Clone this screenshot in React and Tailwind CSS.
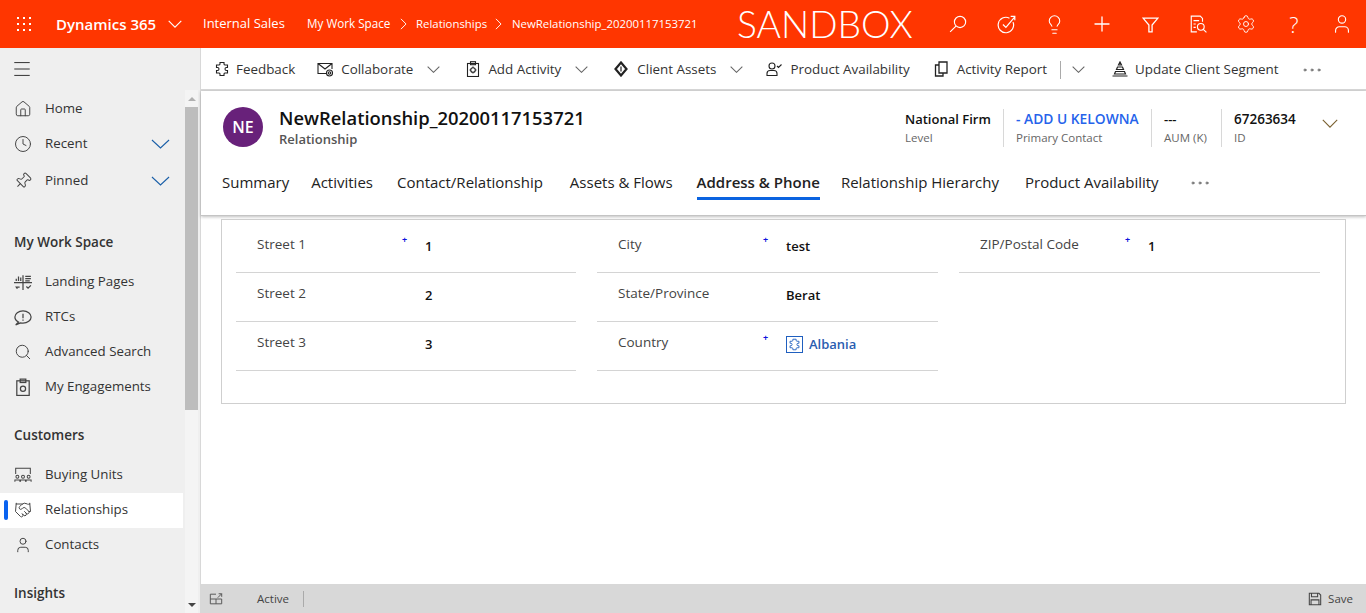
import { Clock, Handshake, Home, Lightbulb, Menu, MoreHorizontal, Pin, Plus, Search, Settings, User } from 'lucide-react';

const svgProps = { fill: 'none', stroke: 'currentColor', strokeWidth: 1.1, viewBox: '0 0 16 16' };

const Chevron = ({ className }) => (
  <svg viewBox="0 0 20 10" preserveAspectRatio="none" fill="none" stroke="currentColor" strokeWidth={1.1} className={`shrink-0 ${className}`}>
    <path d="M1 1l9 8 9-8" vectorEffect="non-scaling-stroke" />
  </svg>
);
const Crumb = () => (
  <svg viewBox="0 0 8 14" fill="none" stroke="currentColor" strokeWidth={1.1} className="w-[7px] h-[12px] shrink-0">
    <path d="M1 1l6 6-6 6" />
  </svg>
);
const PuzzleIcon = ({ className }) => (
  <svg {...svgProps} className={className}>
    <path d="M6 1.500h4v1.200a1.200 1.200 0 0 0 1 1.300h2.500v2.500h-1a1.500 1.500 0 0 0 0 3h1v2.500H11a1.200 1.200 0 0 0-1 1.300v1.200H6v-1.200a1.200 1.200 0 0 0-1-1.300H2.500V9.500h1a1.500 1.500 0 0 0 0-3h-1V4H5a1.200 1.200 0 0 0 1-1.300z" />
  </svg>
);
const CollabIcon = ({ className }) => (
  <svg {...svgProps} className={className}>
    <path d="M9 12.500H1V2.500h14V8M1 2.500l7 5.500 7-5.500" />
    <circle cx="12.500" cy="12" r="3" />
    <circle cx="12.500" cy="12" r="1.200" />
  </svg>
);
const ClipGearIcon = ({ className }) => (
  <svg {...svgProps} className={className}>
    <rect x="2.500" y="2.500" width="11" height="13" />
    <rect x="5.500" y="0.700" width="5" height="3" />
    <circle cx="8" cy="9" r="2.300" />
    <path d="M8 5.500v1.200M8 11.300v1.200M4.500 9h1.200M10.300 9h1.200" />
  </svg>
);
const DiamondIcon = ({ className }) => (
  <svg {...svgProps} strokeWidth={2.2} className={className}>
    <path d="M8 1.500l5.500 6.500L8 14.500 2.500 8z" />
    <path d="M8 5.500v5" strokeWidth={1.2} />
  </svg>
);
const UserCheckIcon = ({ className }) => (
  <svg {...svgProps} className={className}>
    <circle cx="6" cy="5" r="3" />
    <path d="M1 14.500v-2a3 3 0 0 1 3-3h4a3 3 0 0 1 3 3v2zM11 5l1.500 1.500L15.500 3.500" />
  </svg>
);
const PagesIcon = ({ className }) => (
  <svg {...svgProps} strokeWidth={1.3} className={className}>
    <path d="M6 1h8v11H6zM6 4H2.500v11H10v-3" />
  </svg>
);
const PyramidIcon = ({ className }) => (
  <svg {...svgProps} className={className}>
    <path d="M8 1l1.500 3h-3zM5.500 6h5l1 2.500h-7zM3.500 10.500h9l1 2.500h-11zM.5 15h15" strokeWidth={1.2} />
  </svg>
);
const TopSearchIcon = ({ className }) => (
  <svg {...svgProps} className={className} strokeWidth={1}>
    <circle cx="9.800" cy="6.200" r="5" />
    <path d="M6.200 9.800L1 15" />
  </svg>
);
const TaskIcon = ({ className }) => (
  <svg {...svgProps} className={className} strokeWidth={1}>
    <path d="M13.500 6a6.500 6.500 0 1 1-3-3.300" />
    <path d="M5 8l2.500 2.500L15 1.500M11.500 1.200H15v3.300" />
  </svg>
);
const FunnelIcon = ({ className }) => (
  <svg {...svgProps} className={className} strokeWidth={1.2}>
    <path d="M1 2h14L9.500 8.500V15h-3V8.500z" />
  </svg>
);
const DocSearchIcon = ({ className }) => (
  <svg {...svgProps} className={className} strokeWidth={1}>
    <path d="M7 15H2V1h8l2 2v3M4 5h5M4 8h2M4 11h2" />
    <circle cx="10.500" cy="10.500" r="3" />
    <path d="M12.700 12.700L15.500 15.500" />
  </svg>
);
const WaffleIcon = () => (
  <svg viewBox="0 0 16 16" className="w-4 h-4" fill="white">
    {[1, 7, 13].flatMap((y) => [1, 7, 13].map((x) => <rect key={`${x}-${y}`} x={x} y={y} width="2" height="2" />))}
  </svg>
);
const LandingIcon = ({ className }) => (
  <svg {...svgProps} className={className}>
    <path d="M0 8.500h16M8 2v13M2 7V5M4 7V3M6 7V4M10 3h5M10 5h5M10 7h4M3 14l-1-1.500h3M11 12l1.500 1.500L15 11" />
  </svg>
);
const BubbleIcon = ({ className }) => (
  <svg {...svgProps} className={className}>
    <path d="M4 12.500C2 11.500 .8 9.900 .8 8c0-3 3.200-5.500 7.200-5.500s7.200 2.500 7.200 5.500-3.200 5.500-7.200 5.500c-.8 0-1.500-.1-2.200-.3L1.500 15z" />
    <path d="M8 5v4M8 10.300v1" />
  </svg>
);
const EngageIcon = ({ className }) => (
  <svg {...svgProps} className={className}>
    <rect x="2.500" y="2.500" width="11" height="13" />
    <rect x="5.500" y="1" width="5" height="3" />
    <circle cx="8" cy="9.500" r="2.300" />
  </svg>
);
const UnitsIcon = ({ className }) => (
  <svg {...svgProps} className={className} strokeWidth={0.9}>
    <path d="M1.500 7V2h13v5" />
    <circle cx="3" cy="9.500" r="1.300" />
    <circle cx="8" cy="9.500" r="1.300" />
    <circle cx="13" cy="9.500" r="1.300" />
    <path d="M.8 14v-1.500h4.400V14M5.800 14v-1.500h4.400V14M10.800 14v-1.500h4.400V14" />
  </svg>
);
const TiltedPin = ({ className, strokeWidth }) => <Pin className={`rotate-45 ${className}`} strokeWidth={strokeWidth} />;
const RecordIcon = () => (
  <span className="w-[17px] h-[17px] mr-[6px] border border-[#1f5fbf] flex items-center justify-center">
    <PuzzleIcon className="w-[13px] h-[13px] text-[#1f5fbf]" />
  </span>
);

function ToolItem({ icon: Icon, label, chevron, gap = 'mr-2', className = '' }) {
  return (
    <div className={`flex items-center text-[13.400px] text-[#333] whitespace-nowrap ${className}`}>
      <Icon className={`w-4 h-4 text-[#222] ${gap}`} />
      <span>{label}</span>
      {chevron && <Chevron className="w-[13px] h-[7px] ml-[14px] text-[#666]" />}
    </div>
  );
}

function NavItem({ icon: Icon, label, chevron, active }) {
  return (
    <div className={`relative h-[35px] flex items-center pl-[14px] text-[13.300px] text-[#333] ${active ? 'bg-white' : ''}`}>
      {active && <span className="absolute left-1 top-[7px] w-1 h-5 rounded-sm bg-[#0a63f0]" />}
      <Icon className="w-[18px] h-[18px] text-[#444] shrink-0" strokeWidth={1.3} />
      <span className="ml-[13px] flex-1 whitespace-nowrap">{label}</span>
      {chevron && <Chevron className="w-[19px] h-[10px] mr-[13px] text-[#1a5fa8]" />}
    </div>
  );
}

function Section({ title, className = '' }) {
  return <div className={`pl-[14px] text-[13.500px] font-semibold text-[#333] ${className}`}>{title}</div>;
}

function FieldRow({ label, required, value, first, link }) {
  return (
    <div className={`relative flex border-b border-[#d4d4d4] ${first ? 'h-[53px] pt-[15px]' : 'h-[49px] pt-[11px]'}`}>
      <div className="w-[166px] pl-[21px] text-[13.500px] leading-[18px] text-[#444] whitespace-nowrap">{label}</div>
      <div className="w-[23px] text-[9px] leading-[10px] font-bold text-[#1111dd]">{required && '+'}</div>
      <div className="pt-[2px] text-[13px] leading-[18px] font-semibold text-[#111] flex items-center h-[20px] whitespace-nowrap">
        {link ? (
          <>
            <RecordIcon />
            <span className="text-[#2a5db0]">{value}</span>
          </>
        ) : (
          value
        )}
      </div>
    </div>
  );
}

function HeaderField({ value, label, className = '', valueClass = 'text-[13px] text-[#111]' }) {
  return (
    <div className={`h-[38px] ${className}`}>
      <div className={`leading-[20px] font-semibold whitespace-nowrap ${valueClass}`}>{value}</div>
      <div className="text-[11.500px] leading-[18px] text-[#666] whitespace-nowrap">{label}</div>
    </div>
  );
}

const topIcons = [
  <TopSearchIcon key="s" className="w-[18px] h-[18px]" />,
  <TaskIcon key="t" className="w-[19px] h-[19px]" />,
  <Lightbulb key="b" className="w-[21px] h-[21px]" strokeWidth={1.2} />,
  <Plus key="p" className="w-6 h-6" strokeWidth={1.3} />,
  <FunnelIcon key="f" className="w-[17px] h-[17px]" />,
  <DocSearchIcon key="d" className="w-[18px] h-[18px]" />,
  <Settings key="g" className="w-[20px] h-[20px]" strokeWidth={1.1} />,
  <span key="q" className="text-[22px] font-light leading-none">?</span>,
  <User key="u" className="w-[22px] h-[22px]" strokeWidth={1.2} />,
];

const tabs = [
  ['Summary', 'mr-[22px]'],
  ['Activities', 'mr-[24px]'],
  ['Contact/Relationship', 'mr-[27px]'],
  ['Assets & Flows', 'mr-[24px]'],
];

export default function App() {
  return (
    <div className="w-[1366px] h-[613px] overflow-hidden flex flex-col bg-white font-['Open_Sans',sans-serif]">
      <header className="h-12 shrink-0 bg-[#ff3600] text-white flex items-center">
        <div className="w-[56px] pl-4"><WaffleIcon /></div>
        <span className="w-[112px] text-[15px] font-semibold whitespace-nowrap">Dynamics 365</span>
        <Chevron className="w-[14px] h-[8px]" />
        <span className="ml-[21px] w-[104px] text-[13px] whitespace-nowrap">Internal Sales</span>
        <span className="w-[93px] text-[11.700px] whitespace-nowrap">My Work Space</span>
        <Crumb />
        <span className="ml-[9px] w-[79px] text-[11.400px] whitespace-nowrap">Relationships</span>
        <Crumb />
        <span className="ml-[10px] w-[225px] text-[11.400px] whitespace-nowrap">NewRelationship_20200117153721</span>
        <span className="w-[197px] text-[37.300px] font-['Lato',sans-serif] font-light leading-[46px] whitespace-nowrap">SANDBOX</span>
        {topIcons.map((icon, i) => (
          <div key={i} className="w-12 h-12 flex items-center justify-center">{icon}</div>
        ))}
      </header>

      <div className="flex-1 min-h-0 flex">
        <aside className="w-[201px] shrink-0 flex flex-col bg-[#efefef] border-r border-[#d8d8d8]">
          <div className="h-[42px] shrink-0 pl-[11px] flex items-center">
            <Menu className="w-[22px] h-[22px] text-[#222]" strokeWidth={1} />
          </div>
          <div className="flex-1 min-h-0 flex">
            <nav className="w-[183px] overflow-hidden pt-[1px]">
              <NavItem icon={Home} label="Home" />
              <NavItem icon={Clock} label="Recent" chevron />
              <div className="mt-[2px]"><NavItem icon={TiltedPin} label="Pinned" chevron /></div>
              <Section title="My Work Space" className="mt-[34px] mb-[12px]" />
              <NavItem icon={LandingIcon} label="Landing Pages" />
              <NavItem icon={BubbleIcon} label="RTCs" />
              <NavItem icon={Search} label="Advanced Search" />
              <NavItem icon={EngageIcon} label="My Engagements" />
              <Section title="Customers" className="mt-[21px] mb-[12px]" />
              <NavItem icon={UnitsIcon} label="Buying Units" />
              <NavItem icon={Handshake} label="Relationships" active />
              <NavItem icon={User} label="Contacts" />
              <Section title="Insights" className="mt-[20px]" />
            </nav>
            <div className="ml-[2px] w-[13px] bg-[#f4f4f4] flex flex-col items-center">
              <div className="h-[17px] shrink-0 flex items-center justify-center">
                <span className="w-0 h-0 border-x-[4px] border-x-transparent border-b-[4px] border-b-[#b0b0b0]" />
              </div>
              <div className="w-full h-[303px] bg-[#bdbdbd]" />
              <div className="flex-1" />
              <div className="h-[17px] shrink-0 flex items-center justify-center">
                <span className="w-0 h-0 border-x-[4px] border-x-transparent border-t-[4px] border-t-[#444]" />
              </div>
            </div>
          </div>
        </aside>

        <main className="flex-1 min-w-0 flex flex-col">
          <div className="h-[43px] shrink-0 flex items-center pl-[13px] pt-[2px] border-b-[2px] border-[#d8d8d8]">
            <ToolItem icon={PuzzleIcon} label="Feedback" gap="mr-[6px]" className="mr-[22px]" />
            <ToolItem icon={CollabIcon} label="Collaborate" chevron className="mr-[25px]" />
            <ToolItem icon={ClipGearIcon} label="Add Activity" chevron gap="mr-[7px]" className="mr-[25px]" />
            <ToolItem icon={DiamondIcon} label="Client Assets" chevron className="mr-[23px]" />
            <ToolItem icon={UserCheckIcon} label="Product Availability" className="mr-[23px]" />
            <ToolItem icon={PagesIcon} label="Activity Report" />
            <span className="ml-[13px] mr-[11px] w-px h-[18px] bg-[#aaa]" />
            <Chevron className="w-[13px] h-[7px] mr-[27px] text-[#666]" />
            <ToolItem icon={PyramidIcon} label="Update Client Segment" gap="mr-[7px]" className="mr-[21px]" />
            <MoreHorizontal className="w-6 h-6 text-[#666]" strokeWidth={1} />
          </div>

          <div className="h-[125px] shrink-0 border-b border-[#c4c4c4] shadow-[0_1px_3px_rgba(0,0,0,0.25)] flex flex-col">
            <div className="flex h-[72px] pt-4 pl-[22px]">
              <div className="w-10 h-10 rounded-full bg-[#68217a] text-white flex items-center justify-center text-[16px] font-semibold shrink-0">NE</div>
              <div className="ml-4 flex-1">
                <div className="-mt-[1px] text-[18.400px] leading-[24px] font-semibold text-[#111] whitespace-nowrap">NewRelationship_20200117153721</div>
                <div className="text-[13px] leading-[19px] font-semibold text-[#555]">Relationship</div>
              </div>
              <div className="flex items-start pt-[2px] pr-[28px]">
                <HeaderField value="National Firm" label="Level" className="w-[99px] border-r border-[#d8d8d8]" />
                <HeaderField value="- ADD U KELOWNA" label="Primary Contact" valueClass="text-[13.800px] text-[#2563eb]" className="w-[148px] pl-[12px] border-r border-[#d8d8d8]" />
                <HeaderField value="---" label="AUM (K)" className="w-[70px] pl-[12px] border-r border-[#d8d8d8]" />
                <HeaderField value="67263634" label="ID" valueClass="text-[13.500px] text-[#111]" className="w-[100px] pl-[12px]" />
                <Chevron className="mt-[10px] w-[16px] h-[9px] text-[#7a6030]" />
              </div>
            </div>
            <div className="flex items-start pl-[21px] h-[44px] text-[15px] leading-[22px] text-[#222] whitespace-nowrap">
              {tabs.map(([t, m]) => (
                <span key={t} className={`pt-[8px] ${m}`}>{t}</span>
              ))}
              <span className="pt-[8px] pb-[4px] mr-[21px] font-semibold text-[#222] border-b-[3px] border-[#0a63e0]">Address & Phone</span>
              <span className="pt-[8px] mr-[26px]">Relationship Hierarchy</span>
              <span className="pt-[8px] mr-[29px]">Product Availability</span>
              <MoreHorizontal className="mt-[8px] w-6 h-6 text-[#666]" strokeWidth={1} />
            </div>
          </div>

          <section className="mt-[3px] ml-5 mr-5 h-[185px] shrink-0 border border-[#cfcfcf] pl-[14px] pr-[24px] grid grid-cols-[340px_341px_361px] gap-x-[21px] content-start">
            <div>
              <FieldRow first label="Street 1" required value="1" />
              <FieldRow label="Street 2" value="2" />
              <FieldRow label="Street 3" value="3" />
            </div>
            <div>
              <FieldRow first label="City" required value="test" />
              <FieldRow label="State/Province" value="Berat" />
              <FieldRow label="Country" required value="Albania" link />
            </div>
            <div>
              <FieldRow first label="ZIP/Postal Code" required value="1" />
            </div>
          </section>

          <div className="flex-1" />

          <footer className="h-[29px] shrink-0 bg-[#d8d8d8] flex items-center pl-2 pr-[13px] text-[11.500px] text-[#444]">
            <svg {...svgProps} className="w-[14px] h-[14px] text-[#555]">
              <path d="M8 2.500H1.500v11h13V8M1.500 8h13M8 8v5.500M10 6.500l4.500-4.500M11 2h3.500v3.500" />
            </svg>
            <span className="ml-[34px] w-[46px]">Active</span>
            <span className="w-px h-[16px] bg-[#aaa]" />
            <div className="flex-1" />
            <svg {...svgProps} className="w-[14px] h-[14px] mr-[6px] text-[#444]" strokeWidth={1.2}>
              <path d="M1.500 1.500h11l2 2v11h-13zM4 1.500v4h7v-4M3.500 14.500V9h9v5.500" />
            </svg>
            <span>Save</span>
          </footer>
        </main>
      </div>
    </div>
  );
}
